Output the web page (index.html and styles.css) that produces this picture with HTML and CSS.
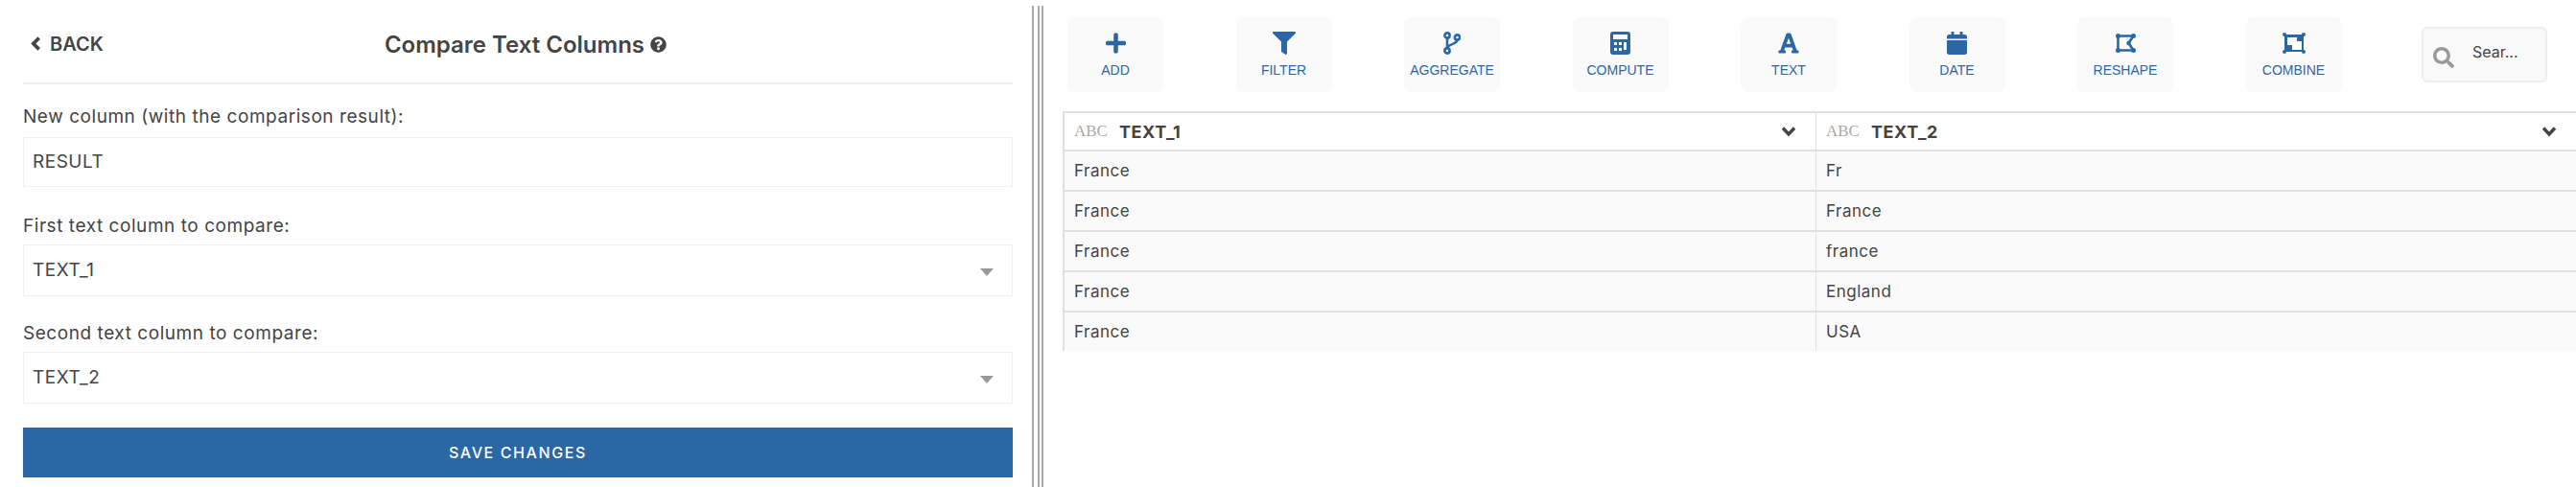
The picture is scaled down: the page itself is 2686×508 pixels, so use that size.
FILE: index.html
```html
<!DOCTYPE html>
<html lang="en">
<head>
  <meta charset="UTF-8">
  <title>Compare Text Columns</title>
  <link rel="stylesheet" href="styles.css">
</head>
<body>

  <div class="panel">
    <div class="panel-head">
      <div class="back">
        <svg class="back-icon" viewBox="0 0 10 14"><path d="M8 1.500 2.500 7 8 12.500" fill="none" stroke="#444" stroke-width="3.400"/></svg>
        <span>BACK</span>
      </div>
      <div class="title">
        Compare Text Columns
        <svg class="help-icon" viewBox="0 0 512 512"><path fill="#444" d="M504 256c0 137-111 248-248 248S8 393 8 256 119 8 256 8s248 111 248 248zM262.700 90c-54.500 0-89.300 23-116.600 63.800-3.500 5.300-2.400 12.400 2.700 16.300l34.700 26.300c5.200 3.900 12.600 3 16.700-2.100 17.900-22.700 30.100-35.800 57.300-35.800 20.400 0 45.700 13.100 45.700 33 0 15-12.400 22.700-32.600 34-23.600 13.200-54.800 29.700-54.800 70.900V302c0 6.600 5.400 12 12 12h56c6.600 0 12-5.400 12-12v-1.300c0-28.600 83.500-29.800 83.500-107.100 0-58.200-60.400-102.300-116.700-102.300zM256 339c-25.500 0-46.200 20.700-46.200 46.200 0 25.500 20.700 46.200 46.200 46.200s46.200-20.700 46.200-46.200c0-25.500-20.700-46.200-46.200-46.200z"/></svg>
      </div>
    </div>

    <div class="group">
      <div class="label">New column (with the comparison result):</div>
      <div class="field field-input">RESULT</div>
    </div>
    <div class="group">
      <div class="label">First text column to compare:</div>
      <div class="field">TEXT_1<span class="arrow"></span></div>
    </div>
    <div class="group">
      <div class="label">Second text column to compare:</div>
      <div class="field">TEXT_2<span class="arrow"></span></div>
    </div>

    <div class="save">SAVE CHANGES</div>
  </div>

  <div class="divider"><i></i><i></i><i></i></div>

  <div class="main">
    <div class="toolbar">
      <div class="tool">
        <svg class="ic-add" viewBox="0 0 448 512"><path d="M416 208H272V64c0-17.670-14.330-32-32-32h-32c-17.670 0-32 14.330-32 32v144H32c-17.670 0-32 14.330-32 32v32c0 17.670 14.330 32 32 32h144v144c0 17.670 14.330 32 32 32h32c17.670 0 32-14.330 32-32V304h144c17.670 0 32-14.330 32-32v-32c0-17.670-14.330-32-32-32z"/></svg>
        <span>ADD</span>
      </div>
      <div class="tool">
        <svg class="ic-filter" viewBox="0 0 512 512"><path d="M487.976 0H24.028C2.710 0-8.047 25.866 7.058 40.971L192 225.941V432c0 7.831 3.821 15.170 10.237 19.662l80 55.980C298.020 518.690 320 507.493 320 487.980V225.941l184.947-184.970C520.021 25.896 509.338 0 487.976 0z"/></svg>
        <span>FILTER</span>
      </div>
      <div class="tool">
        <svg class="ic-branch" viewBox="0 0 18 24"><g fill="none" stroke="#2a67a4" stroke-width="2.600"><circle cx="4" cy="4" r="2.600"/><circle cx="4" cy="20" r="2.600"/><circle cx="14.500" cy="6" r="2.600"/><path d="M4 6.600v10.800M14.500 8.600c0 5-10.500 4-10.500 9"/></g></svg>
        <span>AGGREGATE</span>
      </div>
      <div class="tool">
        <svg class="ic-calc" viewBox="0 0 21 24"><path fill-rule="evenodd" d="M3 0h15a3 3 0 0 1 3 3v18a3 3 0 0 1-3 3H3a3 3 0 0 1-3-3V3a3 3 0 0 1 3-3zM3 3v5h15V3zM4 11v3h3v-3zm5 0v3h3v-3zm5 0v8h3v-8zM4 17v3h3v-3zm5 0v3h3v-3z"/></svg>
        <span>COMPUTE</span>
      </div>
      <div class="tool">
        <svg class="ic-font" viewBox="0 0 448 512"><path d="M432 416h-23.410L277.880 53.690A32 32 0 0 0 247.580 32h-47.160a32 32 0 0 0-30.300 21.690L39.410 416H16a16 16 0 0 0-16 16v32a16 16 0 0 0 16 16h128a16 16 0 0 0 16-16v-32a16 16 0 0 0-16-16h-19.580l23.300-64h152.560l23.300 64H304a16 16 0 0 0-16 16v32a16 16 0 0 0 16 16h128a16 16 0 0 0 16-16v-32a16 16 0 0 0-16-16zM176.850 272L224 142.510 271.150 272z"/></svg>
        <span>TEXT</span>
      </div>
      <div class="tool">
        <svg class="ic-date" viewBox="0 0 448 512"><path d="M12 192h424c6.600 0 12 5.400 12 12v260c0 26.500-21.500 48-48 48H48c-26.500 0-48-21.500-48-48V204c0-6.600 5.400-12 12-12zm436-44v-36c0-26.500-21.500-48-48-48h-48V12c0-6.600-5.400-12-12-12h-40c-6.600 0-12 5.400-12 12v52H160V12c0-6.600-5.400-12-12-12h-40c-6.600 0-12 5.400-12 12v52H48C21.500 64 0 85.500 0 112v36c0 6.600 5.400 12 12 12h424c6.600 0 12-5.400 12-12z"/></svg>
        <span>DATE</span>
      </div>
      <div class="tool">
        <svg class="ic-reshape" viewBox="0 0 21 20"><path d="M2.500 2.500h16l-5 7.500 5 7.500h-16z" fill="none" stroke="#2a67a4" stroke-width="2.600"/><circle cx="2.500" cy="2.500" r="2.500"/><circle cx="18.500" cy="2.500" r="2.500"/><circle cx="2.500" cy="17.500" r="2.500"/><circle cx="18.500" cy="17.500" r="2.500"/><circle cx="13.500" cy="10" r="2.200"/></svg>
        <span>RESHAPE</span>
      </div>
      <div class="tool">
        <svg class="ic-combine" viewBox="0 0 24 22"><path d="M2 2h20v18H2z"/><circle cx="2" cy="2" r="2"/><circle cx="22" cy="2" r="2"/><circle cx="2" cy="20" r="2"/><circle cx="22" cy="20" r="2"/><path fill="#fff" d="M5 5h10v8H5zM10 13h5V9h5v9H10z"/></svg>
        <span>COMBINE</span>
      </div>
      <div class="search">
        <svg class="ic-search" viewBox="0 0 512 512"><path d="M505 442.700 405.300 343c-4.500-4.500-10.600-7-17-7H372c27.600-35.300 44-79.700 44-128C416 93.100 322.900 0 208 0S0 93.100 0 208s93.100 208 208 208c48.300 0 92.700-16.400 128-44v16.300c0 6.400 2.500 12.500 7 17l99.700 99.700c9.400 9.400 24.600 9.400 33.900 0l28.300-28.300c9.400-9.400 9.400-24.600.1-34zM208 336c-70.700 0-128-57.200-128-128 0-70.700 57.200-128 128-128 70.700 0 128 57.200 128 128 0 70.700-57.200 128-128 128z"/></svg>
        <span>Sear...</span>
      </div>
    </div>

    <table class="grid">
      <tr>
        <th>
          <div class="th-in"><span class="type">ABC</span><b>TEXT_1</b>
            <svg class="chev" viewBox="0 0 16 12"><path d="M2 2.500 8 9l6-6.500" fill="none" stroke="#444" stroke-width="3.400"/></svg>
          </div>
        </th>
        <th>
          <div class="th-in"><span class="type">ABC</span><b>TEXT_2</b>
            <svg class="chev" viewBox="0 0 16 12"><path d="M2 2.500 8 9l6-6.500" fill="none" stroke="#444" stroke-width="3.400"/></svg>
          </div>
        </th>
      </tr>
      <tr><td>France</td><td>Fr</td></tr>
      <tr><td>France</td><td>France</td></tr>
      <tr><td>France</td><td>france</td></tr>
      <tr><td>France</td><td>England</td></tr>
      <tr><td>France</td><td>USA</td></tr>
    </table>
  </div>

</body>
</html>
```

FILE: styles.css
```css
body {
  margin: 0;
  height: 508px;
  display: flex;
  overflow: hidden;
  background: white;
  color: #444;
  font-family: Inter, "Noto Sans", sans-serif;
}

/* left panel */
.panel {
  width: 1032px;
  padding: 0 20px 0 24px;
  flex: none;
}
.panel-head {
  height: 86px;
  border-bottom: 2px solid #eee;
  margin-bottom: 22px;
  display: grid;
  grid-template-columns: 1fr auto 1fr;
  align-items: center;
}
.back {
  display: flex;
  align-items: center;
  gap: 9px;
  padding: 5px 0 0 8px;
  font-size: 20px;
  font-weight: 600;
}
.back-icon {
  width: 11px;
  height: 15px;
}
.title {
  grid-column: 2;
  display: flex;
  align-items: center;
  gap: 6px;
  padding: 6px 0 0 16px;
  font-size: 24px;
  font-weight: 600;
}
.help-icon {
  width: 17px;
  height: 17px;
}
.group {
  height: 112px;
}
.label {
  font-size: 19px;
  line-height: 28px;
  margin-bottom: 5px;
  letter-spacing: 0.55px;
}
.group:nth-child(2) .label {
  line-height: 24px;
  margin-bottom: 9px;
}
.field {
  height: 50px;
  border: 1px solid #f0f0f0;
  padding: 0 19px 2px 9px;
  display: flex;
  align-items: center;
  justify-content: space-between;
  font-size: 19px;
  letter-spacing: 0.5px;
}
.field-input {
  height: 48px;
}
.arrow {
  width: 0;
  height: 0;
  border-left: 7px solid transparent;
  border-right: 7px solid transparent;
  border-top: 8px solid #999;
  margin-top: 6px;
}
.save {
  height: 52px;
  line-height: 52px;
  background: #2a67a4;
  color: white;
  text-align: center;
  font-size: 16px;
  font-weight: 500;
  letter-spacing: 1.6px;
}

/* the three vertical lines */
.divider {
  width: 12px;
  flex: none;
  display: flex;
  margin-top: 6px;
}
.divider i {
  width: 2px;
  background: #aaa;
}
.divider i:nth-child(2) {
  margin: 0 2px 0 4px;
}

/* right side */
.main {
  flex: 1;
  min-width: 0;
  padding: 18px 0 0 20px;
}
.toolbar {
  display: flex;
  align-items: flex-start;
  gap: 75.5px;
  padding-left: 5px;
  height: 78px;
}
.tool {
  width: 100px;
  height: 78px;
  flex: none;
  box-sizing: border-box;
  padding-top: 15px;
  background: #fafafa;
  border-radius: 8px;
  display: flex;
  flex-direction: column;
  align-items: center;
  color: #2a67a4;
  font-family: "Liberation Sans", sans-serif;
  font-size: 14px;
}
.tool svg {
  height: 24px;
  fill: #2a67a4;
  margin-bottom: 8px;
}
.tool .ic-add { width: 21px; }
.tool .ic-filter { width: 24px; }
.tool .ic-branch { width: 18px; }
.tool .ic-calc { width: 21px; }
.tool .ic-font { width: 22px; }
.tool .ic-date { width: 21px; }
.tool .ic-reshape { width: 21px; }
.tool .ic-combine { width: 24px; }
.search {
  width: 131px;
  height: 58px;
  box-sizing: border-box;
  margin: 10px 0 0 8px;
  flex: none;
  padding: 0 0 6px 10px;
  background: #f9f9f9;
  border: 2px solid #eee;
  border-radius: 6px;
  display: flex;
  align-items: center;
  gap: 19px;
  font-size: 16px;
}
.ic-search {
  width: 22px;
  height: 22px;
  fill: #999;
  margin-top: 12px;
}

.grid {
  margin-top: 20px;
  width: 1578px;
  table-layout: fixed;
  border-collapse: separate;
  border-spacing: 0;
  border-top: 2px solid #e0e0e0;
  border-left: 2px solid #e0e0e0;
  font-size: 17px;
}
.grid th {
  height: 38px;
  padding: 0 10px;
  background: white;
  text-align: left;
  font-weight: normal;
  border-bottom: 2px solid #e0e0e0;
}
.grid td {
  height: 40px;
  padding: 0 10px;
  background: #fafafa;
  border-bottom: 2px solid #e0e0e0;
  letter-spacing: 0.5px;
}
.grid tr:last-child td {
  border-bottom: none;
}
.grid th:first-child,
.grid td:first-child {
  width: 763px;
  border-right: 1px solid #e0e0e0;
}
.th-in {
  display: flex;
  align-items: center;
}
.type {
  font-family: "Liberation Serif", serif;
  font-size: 17px;
  color: #aaa;
  margin-right: 12px;
}
.th-in b {
  font-size: 18px;
  font-weight: 700;
  letter-spacing: 0.6px;
}
.chev {
  width: 16px;
  height: 12px;
  margin-left: auto;
  margin-right: 10px;
}
```
